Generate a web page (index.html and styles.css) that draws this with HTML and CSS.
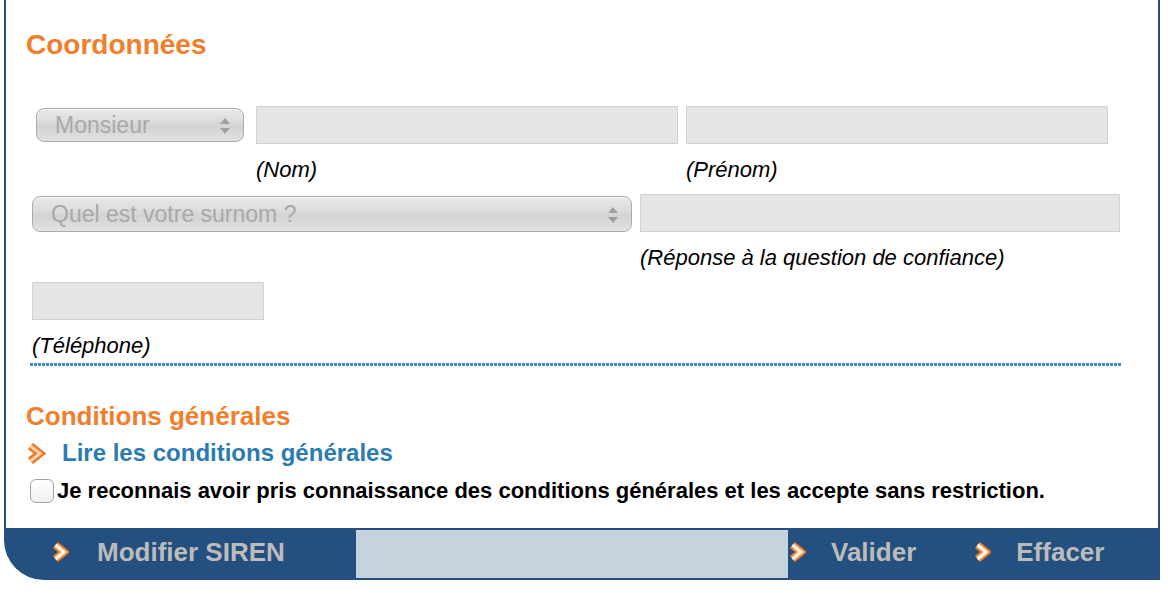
FILE: index.html
```html
<!DOCTYPE html>
<html lang="fr">
<head>
    <meta charset="UTF-8">
    <meta name="viewport" content="width=device-width, initial-scale=1.0">
    <title>Coordonnées</title>
    <link rel="stylesheet" href="styles.css">
</head>
<body>
    <div class="frame">
        <div class="content">
            <h2 class="title">Coordonnées</h2>

            <div class="row row-civ">
                <div class="select select-civ">
                    <span>Monsieur</span>
                    <svg class="arrows" width="12" height="18" viewBox="0 0 12 18"><path d="M6 1 L11 7 L1 7 Z M1 11 L11 11 L6 17 Z" fill="#a0a0a0"/></svg>
                </div>
                <div class="field field-name">
                    <input type="text" class="text-input" disabled>
                    <span class="hint">(Nom)</span>
                </div>
                <div class="field field-name">
                    <input type="text" class="text-input" disabled>
                    <span class="hint">(Prénom)</span>
                </div>
            </div>

            <div class="row">
                <div class="select select-question">
                    <span>Quel est votre surnom ?</span>
                    <svg class="arrows" width="12" height="18" viewBox="0 0 12 18"><path d="M6 1 L11 7 L1 7 Z M1 11 L11 11 L6 17 Z" fill="#a0a0a0"/></svg>
                </div>
                <div class="field field-answer">
                    <input type="text" class="text-input" disabled>
                    <span class="hint">(Réponse à la question de confiance)</span>
                </div>
            </div>

            <div class="row">
                <div class="field field-phone">
                    <input type="text" class="text-input" disabled>
                    <span class="hint">(Téléphone)</span>
                </div>
            </div>

            <div class="separator"></div>

            <h3 class="subtitle">Conditions générales</h3>
            <a class="cg-link" href="#">
                <svg class="chevron" width="20" height="21" viewBox="0 0 20 21">
                    <path d="M4.5 3 L14 10.5 L4.5 18" fill="none" stroke="#ec7420" stroke-width="8"/>
                    <path d="M4.5 3 L14 10.5 L4.5 18" fill="none" stroke="#f39a55" stroke-width="4.5"/>
                    <path d="M4.5 3 L14 10.5 L4.5 18" fill="none" stroke="#fde3cc" stroke-width="2"/>
                </svg>
                Lire les conditions générales
            </a>
            <label class="accept">
                <input type="checkbox" class="check">
                <span>Je reconnais avoir pris connaissance des conditions générales et les accepte sans restriction.</span>
            </label>
        </div>
    </div>

    <div class="actions">
        <a class="action action-siren" href="#">
            <svg class="chevron" width="17" height="20" viewBox="0 0 17 20">
                <path d="M3.5 3 L12 10 L3.5 17" fill="none" stroke="#ec7420" stroke-width="8"/>
                <path d="M3.5 3 L12 10 L3.5 17" fill="none" stroke="#f7b27a" stroke-width="5"/>
                <path d="M3.5 3 L12 10 L3.5 17" fill="none" stroke="#fffaf4" stroke-width="2.6"/>
            </svg>
            Modifier SIREN
        </a>
        <div class="spacer"></div>
        <a class="action action-valid" href="#">
            <svg class="chevron" width="17" height="20" viewBox="0 0 17 20">
                <path d="M3.5 3 L12 10 L3.5 17" fill="none" stroke="#ec7420" stroke-width="8"/>
                <path d="M3.5 3 L12 10 L3.5 17" fill="none" stroke="#f7b27a" stroke-width="5"/>
                <path d="M3.5 3 L12 10 L3.5 17" fill="none" stroke="#fffaf4" stroke-width="2.6"/>
            </svg>
            Valider
        </a>
        <a class="action action-clear" href="#">
            <svg class="chevron" width="17" height="20" viewBox="0 0 17 20">
                <path d="M3.5 3 L12 10 L3.5 17" fill="none" stroke="#ec7420" stroke-width="8"/>
                <path d="M3.5 3 L12 10 L3.5 17" fill="none" stroke="#f7b27a" stroke-width="5"/>
                <path d="M3.5 3 L12 10 L3.5 17" fill="none" stroke="#fffaf4" stroke-width="2.6"/>
            </svg>
            Effacer
        </a>
    </div>
</body>
</html>
```

FILE: styles.css
```css
body {
    font-family: 'Liberation Sans', Arial, Helvetica, sans-serif;
    background: #fff;
    color: #000;
    margin: 0;
    padding: 0;
}
.frame {
    margin-left: 4px;
    width: 1156px;
    box-sizing: border-box;
    border-left: 2px solid #23507e;
    border-right: 2px solid #23507e;
    background: #fff;
}
.content {
    padding: 29px 0 24px 26px;
}
.title {
    margin: 0 0 0 -6px;
    font-size: 28px;
    line-height: 32px;
    font-weight: bold;
    color: #f07e2c;
}
.row {
    display: flex;
    align-items: flex-start;
    gap: 8px;
    margin-top: 12px;
}
.row-civ {
    margin-top: 45px;
}
.field {
    display: flex;
    flex-direction: column;
}
.text-input {
    box-sizing: border-box;
    height: 38px;
    width: 100%;
    margin: 0;
    border: 1px solid #d2d2d2;
    background: #e6e6e6;
    outline: none;
}
.hint {
    margin-top: 14px;
    font-size: 22px;
    line-height: 24px;
    font-style: italic;
}
.field-name {
    width: 422px;
}
.field-answer {
    width: 480px;
}
.field-phone {
    width: 232px;
}
.select {
    box-sizing: border-box;
    display: flex;
    align-items: center;
    justify-content: space-between;
    margin-top: 2px;
    padding: 1px 12px 0 18px;
    border: 1px solid #ababab;
    border-radius: 8px;
    background: linear-gradient(to bottom, #e9e9e9 0%, #dadada 45%, #d3d3d3 55%, #e2e2e2 100%);
    box-shadow: inset 0 1px 0 rgba(255, 255, 255, 0.7);
    color: #a9a9a9;
    font-size: 23px;
}
.select-civ {
    width: 208px;
    height: 34px;
    margin-left: 4px;
    margin-right: 4px;
}
.select-question {
    width: 600px;
    height: 36px;
}
.separator {
    margin: 5px 0 0 -2px;
    width: 1092px;
    height: 3px;
    background: repeating-linear-gradient(to right, #3a8cc2 0 3px, #ffffff 3px 4px);
}
.subtitle {
    margin: 35px 0 0 -6px;
    font-size: 26px;
    line-height: 30px;
    font-weight: bold;
    color: #f07e2c;
}
.cg-link {
    display: flex;
    align-items: center;
    gap: 16px;
    margin: 8px 0 0 -6px;
    font-size: 24px;
    line-height: 28px;
    font-weight: bold;
    color: #2a7bb3;
    text-decoration: none;
}
.chevron {
    flex: none;
}
.accept {
    display: flex;
    align-items: center;
    gap: 3px;
    margin: 11px 0 0 -2px;
    font-size: 22px;
    line-height: 26px;
    font-weight: bold;
}
.check {
    appearance: none;
    -webkit-appearance: none;
    box-sizing: border-box;
    width: 24px;
    height: 24px;
    margin: 0;
    border: 1px solid #a3a3a3;
    border-radius: 6px;
    background: linear-gradient(to bottom, #ffffff, #f1f1f1);
}
.actions {
    display: flex;
    align-items: stretch;
    margin-left: 4px;
    width: 1156px;
    height: 52px;
    background: #23507e;
    border-bottom-left-radius: 40px;
}
.action {
    display: flex;
    align-items: center;
    gap: 25px;
    padding-bottom: 4px;
    font-size: 26px;
    font-weight: bold;
    color: #bcbcbc;
    text-decoration: none;
}
.action-siren {
    box-sizing: border-box;
    width: 352px;
    padding-left: 48px;
    gap: 28px;
}
.spacer {
    width: 432px;
    margin: 2px 0;
    background: #c6d3df;
}
.action-valid {
    margin-left: 1px;
}
.action-clear {
    margin-left: 58px;
}
```
